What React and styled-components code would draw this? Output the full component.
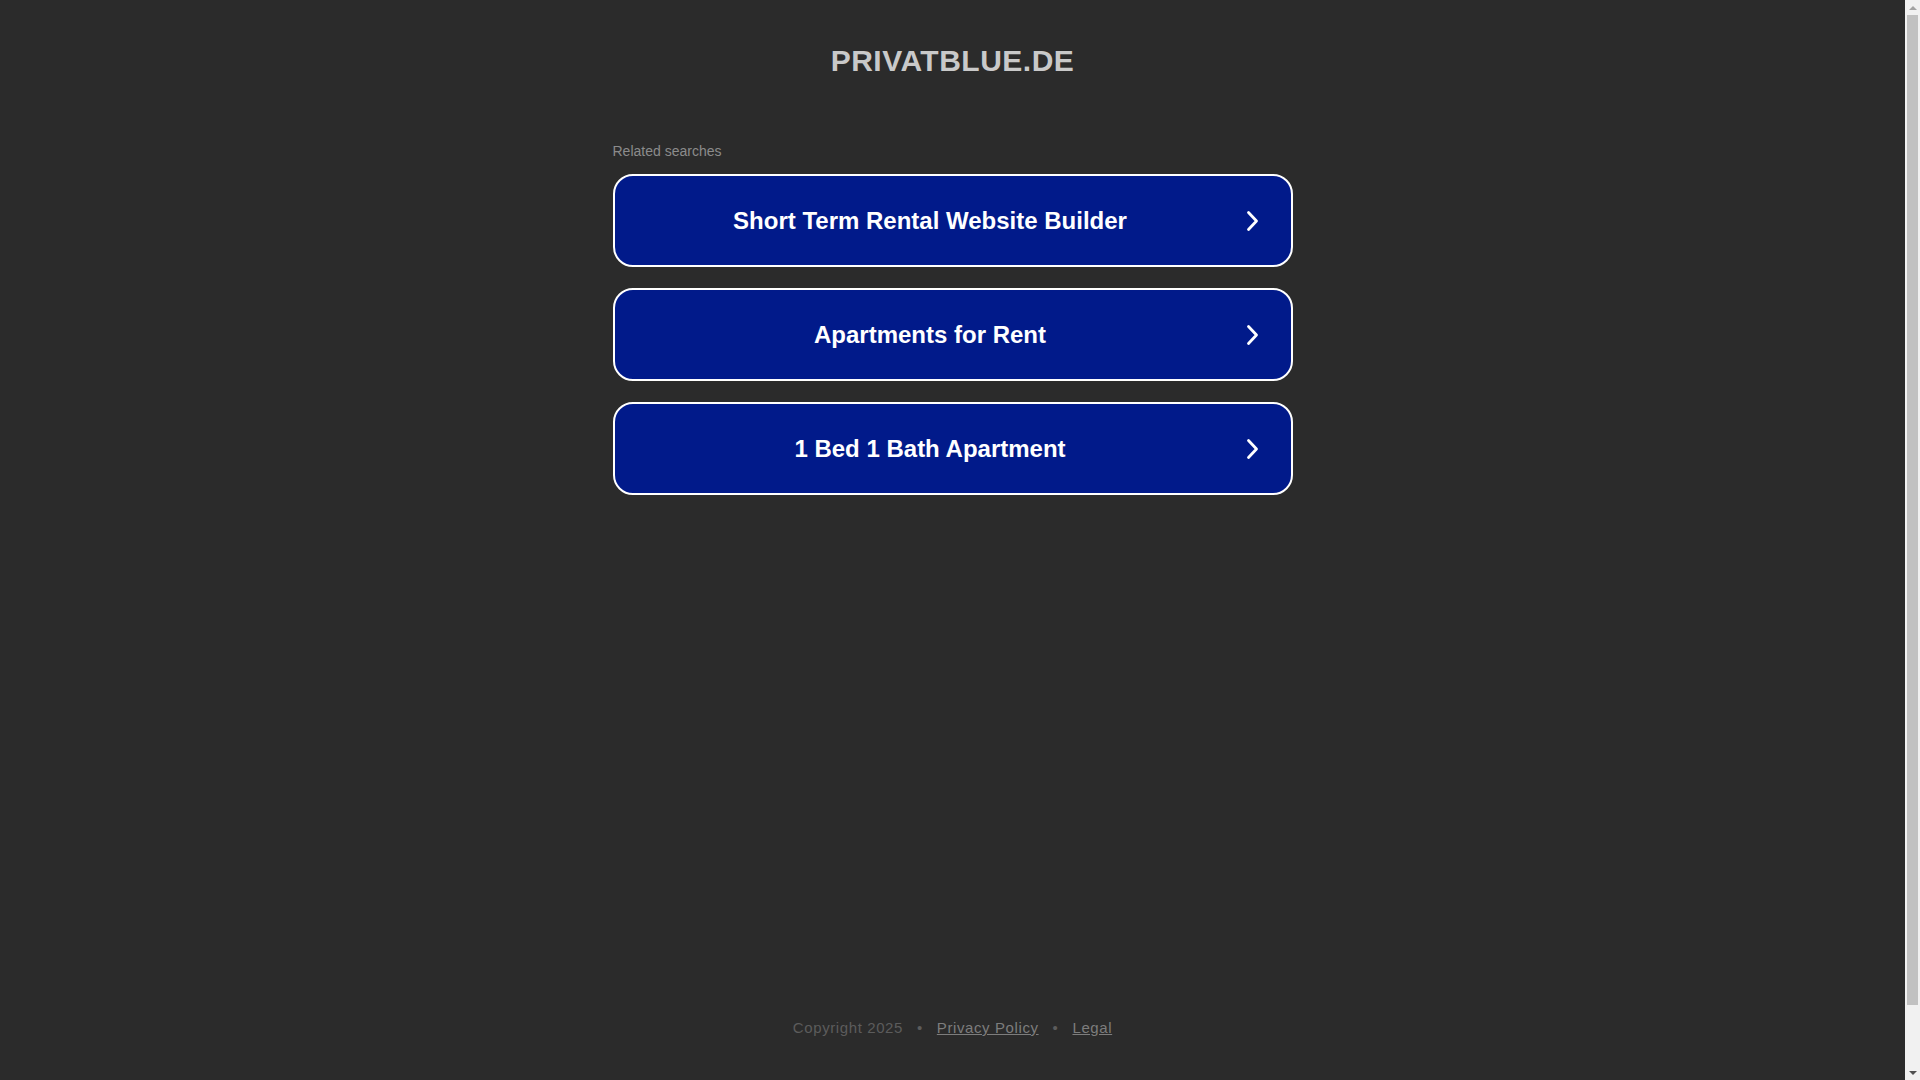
import React from "react";
import styled, { createGlobalStyle } from "styled-components";

const GlobalStyle = createGlobalStyle`
  html, body {
    margin: 0;
    padding: 0;
    background: #2b2b2b;
    overflow: hidden;
  }
  body {
    font-family: "Liberation Sans", Arial, sans-serif;
  }
`;

const Frame = styled.div`
  display: flex;
  height: 100vh;
`;

const Page = styled.div`
  flex: 1;
  display: flex;
  flex-direction: column;
  align-items: center;
  padding-bottom: 44px;
  box-sizing: border-box;
`;

const Title = styled.h1`
  margin: 44px 0 0;
  font-size: 30px;
  font-weight: 700;
  letter-spacing: 0.5px;
  color: #c9c9c9;
  text-align: center;
`;

const Results = styled.main`
  width: 680px;
  margin-top: 65px;
`;

const Caption = styled.div`
  font-size: 14px;
  color: #8b8b8b;
  margin-bottom: 15px;
`;

const SearchLink = styled.a`
  display: flex;
  align-items: center;
  box-sizing: border-box;
  height: 93px;
  margin-bottom: 21px;
  padding: 0 31px 0 0;
  border: 2px solid #fff;
  border-radius: 20px;
  background: #011a8a;
  color: #fff;
  text-decoration: none;
  cursor: pointer;
`;

const Label = styled.span`
  flex: 1;
  text-align: center;
  font-size: 24px;
  font-weight: 700;
`;

const Footer = styled.footer`
  margin-top: auto;
  font-size: 15px;
  letter-spacing: 0.6px;
  color: #5c5c5c;
  display: flex;
  align-items: center;
`;

const Dot = styled.span`
  margin: 0 14px;
`;

const FootLink = styled.a`
  color: #7d7d7d;
  text-decoration: underline;
`;

/* window scrollbar as it appears in the capture */
const ScrollTrack = styled.aside`
  width: 15px;
  flex: none;
  background: #f1f1f1;
  display: flex;
  flex-direction: column;
  align-items: center;
`;

const ScrollButton = styled.div`
  height: 15px;
  width: 15px;
  display: flex;
  align-items: center;
  justify-content: center;
`;

const Arrow = styled.span`
  width: 0;
  height: 0;
  border-left: 4px solid transparent;
  border-right: 4px solid transparent;
  ${(p) =>
    p.$down
      ? `border-top: 4px solid #505050;`
      : `border-bottom: 4px solid #a3a3a3;`}
`;

const Thumb = styled.div`
  width: 11px;
  height: 990px;
  background: #c1c1c1;
`;

const Spacer = styled.div`
  flex: 1;
`;

const Chevron = () => (
  <svg width="14" height="22" viewBox="0 0 14 22" fill="none">
    <polyline
      points="2.5,2.5 10.5,11 2.5,19.5"
      stroke="#fff"
      strokeWidth="2.8"
      strokeLinecap="round"
      strokeLinejoin="round"
    />
  </svg>
);

const searches = [
  "Short Term Rental Website Builder",
  "Apartments for Rent",
  "1 Bed 1 Bath Apartment",
];

export default function App() {
  return (
    <>
      <GlobalStyle />
      <Frame>
        <Page>
          <Title>PRIVATBLUE.DE</Title>
          <Results>
            <Caption>Related searches</Caption>
            {searches.map((s) => (
              <SearchLink key={s}>
                <Label>{s}</Label>
                <Chevron />
              </SearchLink>
            ))}
          </Results>
          <Footer>
            <span>Copyright 2025</span>
            <Dot>•</Dot>
            <FootLink>Privacy Policy</FootLink>
            <Dot>•</Dot>
            <FootLink>Legal</FootLink>
          </Footer>
        </Page>
        <ScrollTrack>
          <ScrollButton>
            <Arrow />
          </ScrollButton>
          <Thumb />
          <Spacer />
          <ScrollButton>
            <Arrow $down />
          </ScrollButton>
        </ScrollTrack>
      </Frame>
    </>
  );
}
